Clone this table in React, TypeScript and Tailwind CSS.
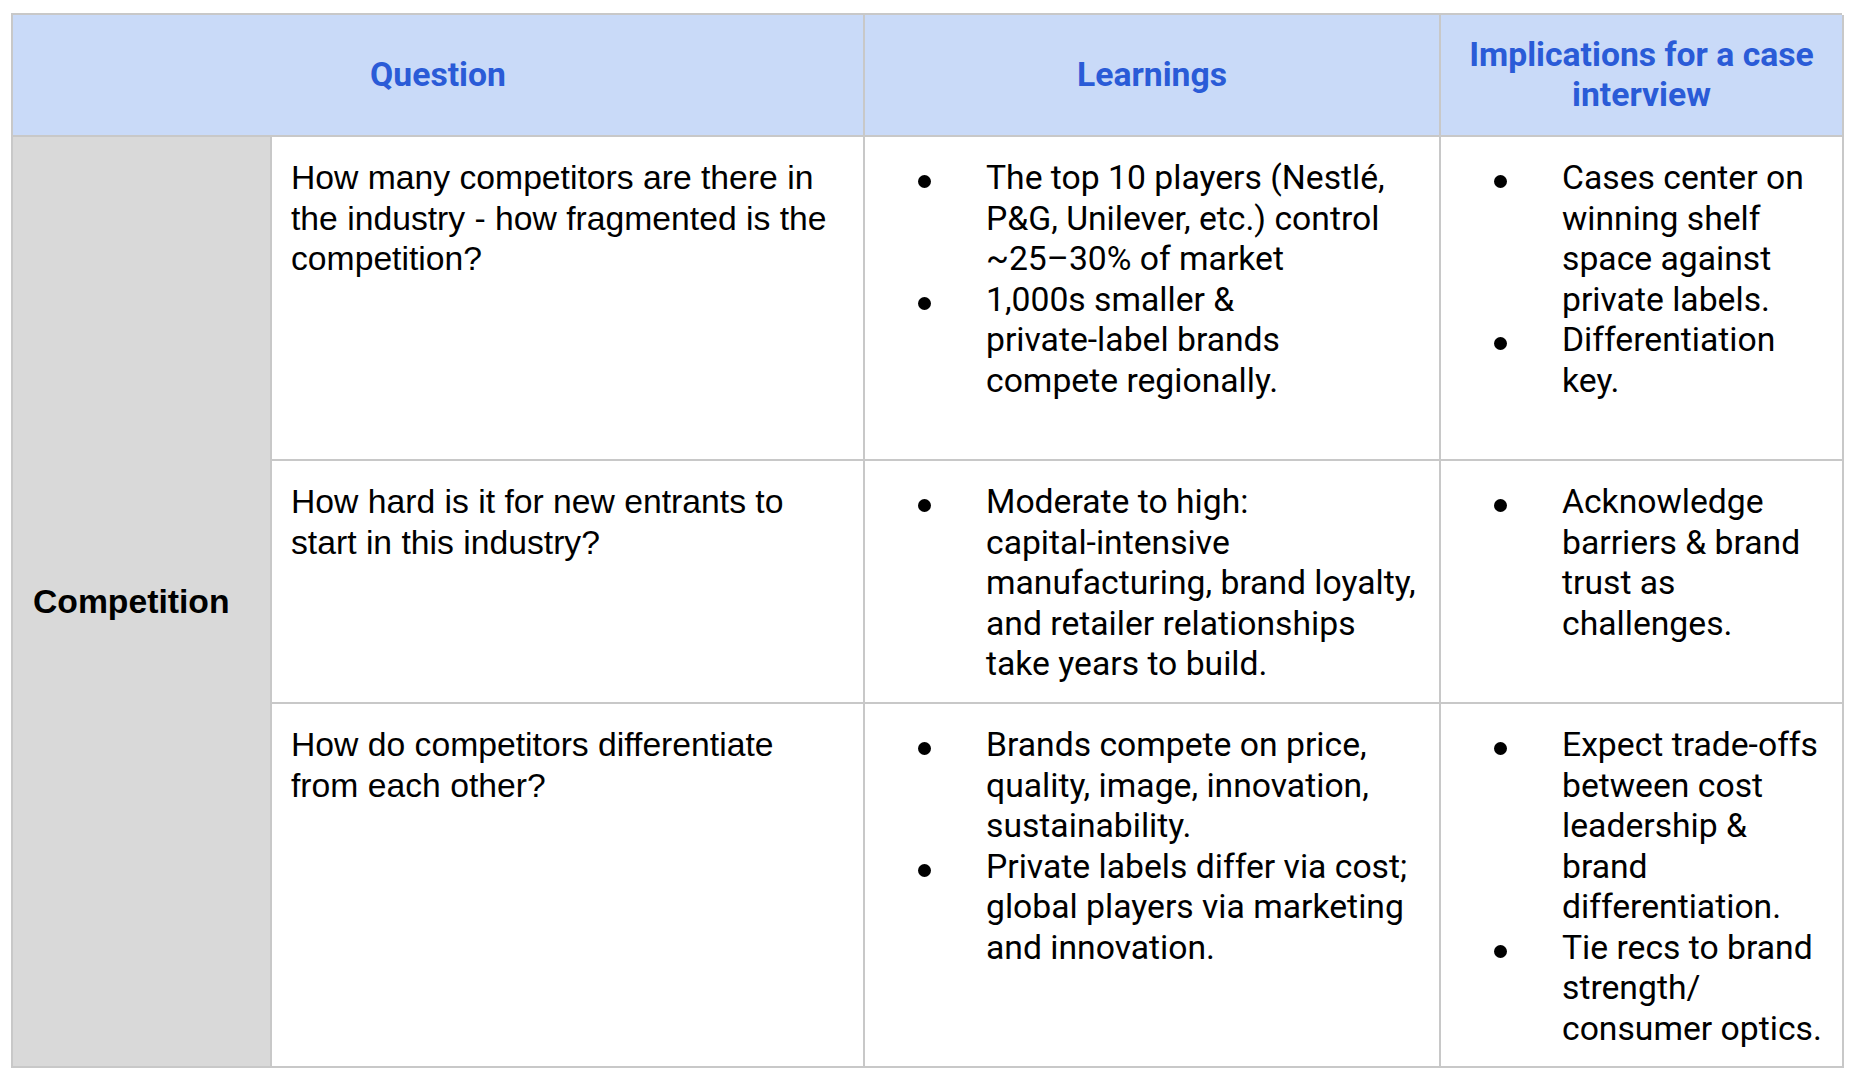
import React from "react";

const arial = "font-['Liberation_Sans',Arial,sans-serif]";
const roboto = "font-['Roboto',sans-serif]";

function Bullets({ items }: { items: React.ReactNode[] }) {
  return (
    <ul className={`${roboto} text-[33.7px] leading-[40.5px] text-black`}>
      {items.map((t, i) => (
        <li key={i} className="flex">
          <span className="w-[102px] shrink-0">
            <span className="block ml-[34px] mt-[17px] w-[13px] h-[13px] rounded-full bg-black" />
          </span>
          <span className="min-w-0">{t}</span>
        </li>
      ))}
    </ul>
  );
}

const cell = "border-r-2 border-b-2 border-[#c8c8c8]";
const nw = (s: string) => <span className="whitespace-nowrap">{s}</span>;

const rows: { q: string; l: React.ReactNode[]; i: React.ReactNode[] }[] = [
  {
    q: "How many competitors are there in the industry - how fragmented is the competition?",
    l: [
      "The top 10 players (Nestlé, P&G, Unilever, etc.) control ~25–30% of market",
      <>1,000s smaller &amp; {nw("private-label")} brands compete regionally.</>,
    ],
    i: ["Cases center on winning shelf space against private labels.", "Differentiation key."],
  },
  {
    q: "How hard is it for new entrants to start in this industry?",
    l: [
      <>
        Moderate to high: {nw("capital-intensive")} manufacturing, brand loyalty, and retailer relationships
        take years to build.
      </>,
    ],
    i: ["Acknowledge barriers & brand trust as challenges."],
  },
  {
    q: "How do competitors differentiate from each other?",
    l: [
      "Brands compete on price, quality, image, innovation, sustainability.",
      "Private labels differ via cost; global players via marketing and innovation.",
    ],
    i: [
      <>Expect {nw("trade-offs")} between cost leadership &amp; brand differentiation.</>,
      "Tie recs to brand strength/ consumer optics.",
    ],
  },
];

export default function App() {
  return (
    <div className="w-[1860px] h-[1084px] bg-white">
      <div className="pt-[13px] pl-[11px]">
        <div className="grid w-[1831px] grid-cols-[259px_593px_576px_403px] grid-rows-[122px_324px_243px_364px] border-t-2 border-l-2 border-[#c8c8c8]">
          <div className={`${cell} col-span-2 bg-[#c9daf8] flex items-center justify-center ${roboto} font-bold text-[33.7px] leading-[40.5px] text-[#2a5bd7]`}>
            Question
          </div>
          <div className={`${cell} bg-[#c9daf8] flex items-center justify-center ${roboto} font-bold text-[33.7px] leading-[40.5px] text-[#2a5bd7]`}>
            Learnings
          </div>
          <div className={`${cell} bg-[#c9daf8] flex items-center justify-center text-center px-[16px] ${roboto} font-bold text-[33.7px] leading-[40.5px] text-[#2a5bd7]`}>
            Implications for a case interview
          </div>

          <div className={`${cell} row-span-3 bg-[#d9d9d9] flex items-center pl-[20px] ${arial} font-bold text-[33.7px] leading-[40.5px] text-black`}>
            Competition
          </div>

          {rows.map((r, idx) => (
            <React.Fragment key={idx}>
              <div className={`${cell} pt-[20px] pl-[19px] pr-[19px] ${arial} text-[33.7px] leading-[40.5px] text-black`}>
                {r.q}
              </div>
              <div className={`${cell} pt-[21px] pl-[19px] pr-[20px]`}>
                <Bullets items={r.l} />
              </div>
              <div className={`${cell} pt-[21px] pl-[19px] pr-[12px]`}>
                <Bullets items={r.i} />
              </div>
            </React.Fragment>
          ))}
        </div>
      </div>
    </div>
  );
}
